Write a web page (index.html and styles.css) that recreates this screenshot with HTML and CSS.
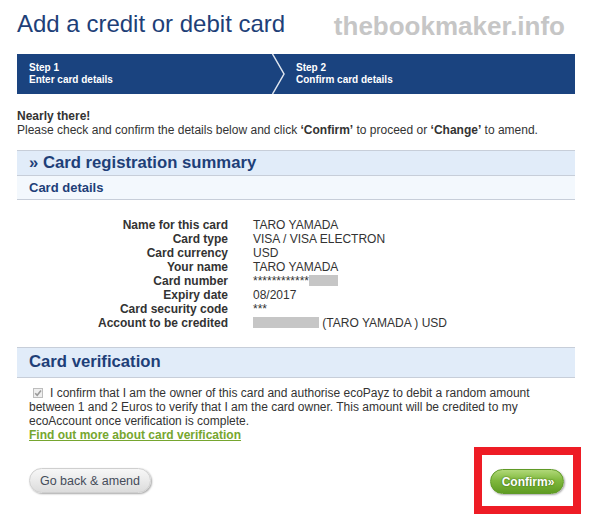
FILE: index.html
```html
<!DOCTYPE html>
<html lang="en">
<head>
<meta charset="utf-8">
<title>Add a credit or debit card</title>
<link rel="stylesheet" href="styles.css">
</head>
<body>
<div class="page">
  <div class="watermark">thebookmaker.info</div>
  <h1 class="title">Add a credit or debit card</h1>

  <div class="steps">
    <div class="step step-first">
      <span class="step-num">Step 1</span>
      <span class="step-label">Enter card details</span>
    </div>
    <svg class="chev" width="14" height="40" viewBox="0 0 14 40"><polyline points="1.5,0 13,20 1.5,40" fill="none" stroke="#dfe6f0" stroke-width="1.5"/></svg>
    <div class="step step-second">
      <span class="step-num">Step 2</span>
      <span class="step-label">Confirm card details</span>
    </div>
  </div>

  <div class="intro">
    <p class="intro-strong">Nearly there!</p>
    <p>Please check and confirm the details below and click <b>‘Confirm’</b> to proceed or <b>‘Change’</b> to amend.</p>
  </div>

  <section class="panel">
    <h2 class="panel-head">» Card registration summary</h2>
    <h3 class="panel-sub">Card details</h3>
    <dl class="details">
      <dt>Name for this card</dt><dd>TARO YAMADA</dd>
      <dt>Card type</dt><dd>VISA / VISA ELECTRON</dd>
      <dt>Card currency</dt><dd>USD</dd>
      <dt>Your name</dt><dd>TARO YAMADA</dd>
      <dt>Card number</dt><dd><span class="stars">************</span><span class="redact redact-num"></span></dd>
      <dt>Expiry date</dt><dd>08/2017</dd>
      <dt>Card security code</dt><dd><span class="stars">***</span></dd>
      <dt>Account to be credited</dt><dd><span class="redact redact-acc"></span> (TARO YAMADA ) USD</dd>
    </dl>
  </section>

  <section class="panel">
    <h2 class="panel-head verify-head">Card verification</h2>
    <p class="verify-text"><svg class="check" width="10" height="10" viewBox="0 0 10 10"><rect x="0.5" y="0.5" width="9" height="9" fill="#efefef" stroke="#bdbdbd"/><polyline points="2.2,5.2 4.2,7.2 8,2.6" fill="none" stroke="#9a9a9a" stroke-width="1.6"/></svg>I confirm that I am the owner of this card and authorise ecoPayz to debit a random amount between 1 and 2 Euros to verify that I am the card owner. This amount will be credited to my ecoAccount once verification is complete.<br><a class="more" href="#">Find out more about card verification</a></p>
  </section>

  <div class="actions">
    <button class="btn btn-back" type="button">Go back &amp; amend</button>
    <div class="highlight">
      <button class="btn btn-confirm" type="button">Confirm»</button>
    </div>
  </div>
</div>
</body>
</html>
```

FILE: styles.css
```css
* { box-sizing: border-box; }

body {
  margin: 0;
  background: #ffffff;
  font-family: "Liberation Sans", Arial, sans-serif;
  font-size: 12px;
  color: #333333;
}

.page {
  position: relative;
  width: 558px;
  margin-left: 17px;
}

.watermark {
  position: absolute;
  top: 3px;
  right: 10px;
  font-size: 26px;
  font-weight: bold;
  line-height: 1;
  color: #c6c6c6;
  white-space: nowrap;
}

.title {
  margin: 10px 0 0;
  font-size: 24px;
  font-weight: normal;
  line-height: 28px;
  color: #1e3f78;
}

.steps {
  display: flex;
  height: 40px;
  margin-top: 16px;
  background: #1a437f;
  color: #ffffff;
}

.step {
  display: flex;
  flex-direction: column;
  padding-top: 8px;
  font-size: 10px;
  font-weight: bold;
  line-height: 12px;
}

.step-first {
  width: 254px;
  padding-left: 12px;
}

.step-second {
  padding-left: 11px;
}

.chev {
  display: block;
  flex: 0 0 14px;
}

.intro {
  margin-top: 15px;
  line-height: 14px;
}

.intro p {
  margin: 0;
}

.intro-strong {
  font-weight: bold;
}

.panel {
  margin: 0;
}

.intro + .panel {
  margin-top: 13px;
}

.panel-head {
  margin: 0;
  height: 25px;
  padding-left: 12px;
  border-top: 1px solid #c7ced9;
  background: #e1ecf9;
  font-size: 16.7px;
  font-weight: bold;
  line-height: 23px;
  color: #1e3f78;
}

.panel-sub {
  margin: 0;
  height: 25px;
  padding-left: 12px;
  border-top: 1px solid #c7ced9;
  border-bottom: 1px solid #c7ced9;
  background: #f3f8fd;
  font-size: 13px;
  font-weight: bold;
  line-height: 23px;
  color: #1e3f78;
}

.details {
  display: grid;
  grid-template-columns: 140px auto;
  column-gap: 25px;
  margin: 18px 0 17px 71px;
  line-height: 14px;
}

.details dt {
  text-align: right;
  font-weight: bold;
  color: #333333;
  white-space: nowrap;
}

.details dd {
  margin: 0;
  white-space: nowrap;
}

.redact {
  display: inline-block;
  height: 11px;
  background: #c6c6c6;
  vertical-align: -1px;
}

.redact-num {
  width: 29px;
}

.redact-acc {
  width: 66px;
}

.verify-head {
  height: 31px;
  border-bottom: 1px solid #c7ced9;
  line-height: 27px;
}

.verify-text {
  margin: 8px 0 0;
  padding: 0 12px;
  line-height: 14px;
}

.check {
  display: inline-block;
  margin: 0 7px 0 4px;
  vertical-align: -1px;
}

.more {
  font-weight: bold;
  color: #76a62f;
  text-decoration: underline;
}

.actions {
  display: flex;
  align-items: center;
  justify-content: space-between;
  margin: 5px -6px 0 0;
  padding-left: 12px;
}

.btn {
  height: 25px;
  border-radius: 13px;
  font-family: "Liberation Sans", Arial, sans-serif;
  cursor: pointer;
}

.btn-back {
  width: 122px;
  padding: 0;
  border: 1px solid #cfcfcf;
  background: linear-gradient(#f7f7f7, #e9e9e9 55%, #dcdcdc);
  box-shadow: 1px 1px 2px rgba(0, 0, 0, 0.35);
  font-size: 12.5px;
  color: #454c5a;
}

.highlight {
  padding: 14px 9px 12px 8px;
  border: 8px solid #ee1c25;
}

.btn-confirm {
  display: block;
  width: 74px;
  padding: 0 0 0 2px;
  border: 1px solid #5f9a26;
  background: linear-gradient(#b0d878, #80b93e 45%, #5f9b22 100%);
  box-shadow: 1px 1px 2px rgba(0, 0, 0, 0.35);
  font-size: 12px;
  font-weight: bold;
  color: #ffffff;
  text-shadow: 0 0 2px #2f5a0c;
}
```
